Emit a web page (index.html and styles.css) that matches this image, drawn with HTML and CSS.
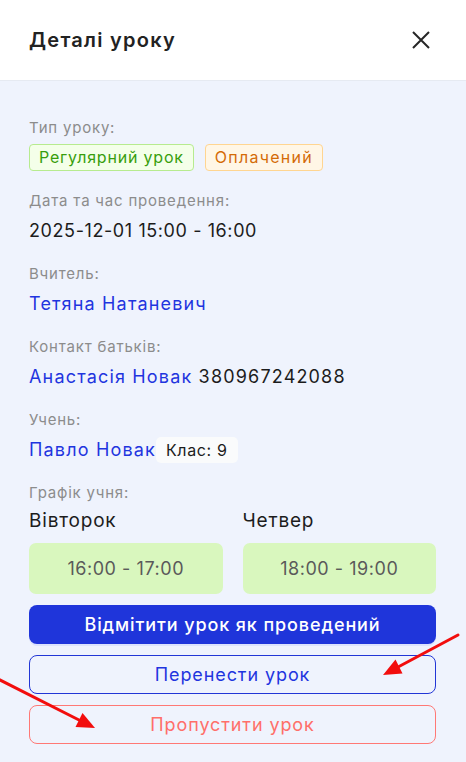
FILE: index.html
```html
<!DOCTYPE html>
<html lang="uk">
<head>
<meta charset="UTF-8" />
<meta name="viewport" content="width=device-width, initial-scale=1" />
<title>Деталі уроку</title>
<link rel="stylesheet" href="styles.css">
</head>
<body>
  <div class="drawer">
    <div class="drawer-header">
      <h2 class="drawer-title">Деталі уроку</h2>
      <button class="close-btn" aria-label="Закрити">
        <svg width="18" height="18" viewBox="0 0 18 18">
          <path d="M1 1 L17 17 M17 1 L1 17" stroke="#262626" stroke-width="2" fill="none" />
        </svg>
      </button>
    </div>

    <div class="drawer-body">
      <div class="field">
        <div class="label">Тип уроку:</div>
        <div class="tags">
          <span class="tag tag-green">Регулярний урок</span>
          <span class="tag tag-orange">Оплачений</span>
        </div>
      </div>

      <div class="field">
        <div class="label">Дата та час проведення:</div>
        <div class="value date">2025-12-01 15:00 - 16:00</div>
      </div>

      <div class="field">
        <div class="label">Вчитель:</div>
        <div class="value"><a class="link" href="#">Тетяна Натаневич</a></div>
      </div>

      <div class="field">
        <div class="label">Контакт батьків:</div>
        <div class="value"><a class="link" href="#">Анастасія Новак</a> 380967242088</div>
      </div>

      <div class="field">
        <div class="label">Учень:</div>
        <div class="value"><a class="link" href="#">Павло Новак</a><span class="grade">Клас: 9</span></div>
      </div>

      <div class="field">
        <div class="label">Графік учня:</div>
        <div class="schedule">
          <div class="day">
            <div class="day-name">Вівторок</div>
            <div class="slot">16:00 - 17:00</div>
          </div>
          <div class="day">
            <div class="day-name">Четвер</div>
            <div class="slot">18:00 - 19:00</div>
          </div>
        </div>
      </div>

      <div class="actions">
        <button class="btn btn-primary">Відмітити урок як проведений</button>
        <button class="btn btn-outline">Перенести урок</button>
        <button class="btn btn-danger">Пропустити урок</button>
      </div>
    </div>

    <!-- annotation arrows -->
    <svg class="arrows" width="466" height="762" viewBox="0 0 466 762">
      <line x1="458" y1="635" x2="399" y2="666.5" stroke="#f20d0d" stroke-width="3" stroke-linecap="round" />
      <polygon points="383,675 402.5,673.5 395.5,659.5" fill="#f20d0d" />
      <line x1="-2" y1="679" x2="79" y2="720" stroke="#f20d0d" stroke-width="3" stroke-linecap="round" />
      <polygon points="95,728 75.5,727 82.5,713" fill="#f20d0d" />
    </svg>
  </div>
</body>
</html>
```

FILE: styles.css
```css
* {
  box-sizing: border-box;
}
body {
  margin: 0;
  font-family: Inter, "Noto Sans", sans-serif;
  letter-spacing: 0.05em;
  background: #eff3fd;
}
.drawer {
  position: relative;
  width: 466px;
  height: 762px;
  overflow: hidden;
  background: #eff3fd;
}
.drawer-header {
  height: 81px;
  background: #fff;
  border-bottom: 1px solid #e6eaf2;
  display: flex;
  align-items: center;
  justify-content: space-between;
  padding: 0 36px 0 29px;
}
.drawer-title {
  margin: 0;
  font-size: 20px;
  font-weight: 600;
  letter-spacing: 0.063em;
  color: #222;
}
.close-btn {
  border: none;
  background: none;
  padding: 0;
  width: 18px;
  height: 18px;
  cursor: pointer;
}
.drawer-body {
  padding: 36px 30px 0 29px;
  display: flex;
  flex-direction: column;
  gap: 19px;
}
.label {
  font-size: 15px;
  line-height: 22px;
  color: #8c8c8c;
}
.value {
  margin-top: 6px;
  font-size: 18px;
  line-height: 26px;
  letter-spacing: 0.065em;
  color: #1c1c1c;
  display: flex;
  align-items: center;
  white-space: pre;
}
.date {
  letter-spacing: 0.033em;
}
.link {
  color: #1f35df;
  text-decoration: none;
}
.grade {
  background: #fafbfc;
  border-radius: 5px;
  padding: 0 10px;
  font-size: 16px;
  line-height: 26px;
  letter-spacing: 0.04em;
}
.tags {
  margin-top: 5px;
  display: flex;
  gap: 11px;
}
.tag {
  font-size: 16px;
  line-height: 25px;
  padding: 0 9px;
  border-radius: 4px;
  border: 1px solid;
}
.tag-green {
  background: #f4ffe9;
  border-color: #b7eb8f;
  color: #389e0d;
}
.tag-orange {
  background: #fff6e6;
  border-color: #ffd591;
  color: #d46b08;
  letter-spacing: 0.08em;
}
.schedule {
  display: grid;
  grid-template-columns: 1fr 1fr;
  gap: 20px;
  margin-top: 4px;
}
.day-name {
  font-size: 19px;
  line-height: 26px;
  color: #1c1c1c;
}
.slot {
  margin-top: 9px;
  height: 51px;
  border-radius: 7px;
  background: #d9f7be;
  color: #5a5a5a;
  font-size: 18px;
  letter-spacing: 0.03em;
  display: flex;
  align-items: center;
  justify-content: center;
}
.actions {
  margin-top: -8px;
  display: flex;
  flex-direction: column;
  gap: 11px;
}
.btn {
  height: 39px;
  border-radius: 8px;
  font-family: inherit;
  font-size: 18px;
  letter-spacing: 0.05em;
  cursor: pointer;
  background: transparent;
}
.btn-primary {
  background: #1f35da;
  border: none;
  color: #fff;
  font-weight: 500;
  box-shadow: 0 2px 0 rgba(5, 40, 255, 0.08);
}
.btn-outline {
  border: 1px solid #2236d6;
  color: #1f35df;
}
.btn-danger {
  border: 1px solid #ff7875;
  color: #ff6f6a;
}
.arrows {
  position: absolute;
  left: 0;
  top: 0;
  pointer-events: none;
}
```
